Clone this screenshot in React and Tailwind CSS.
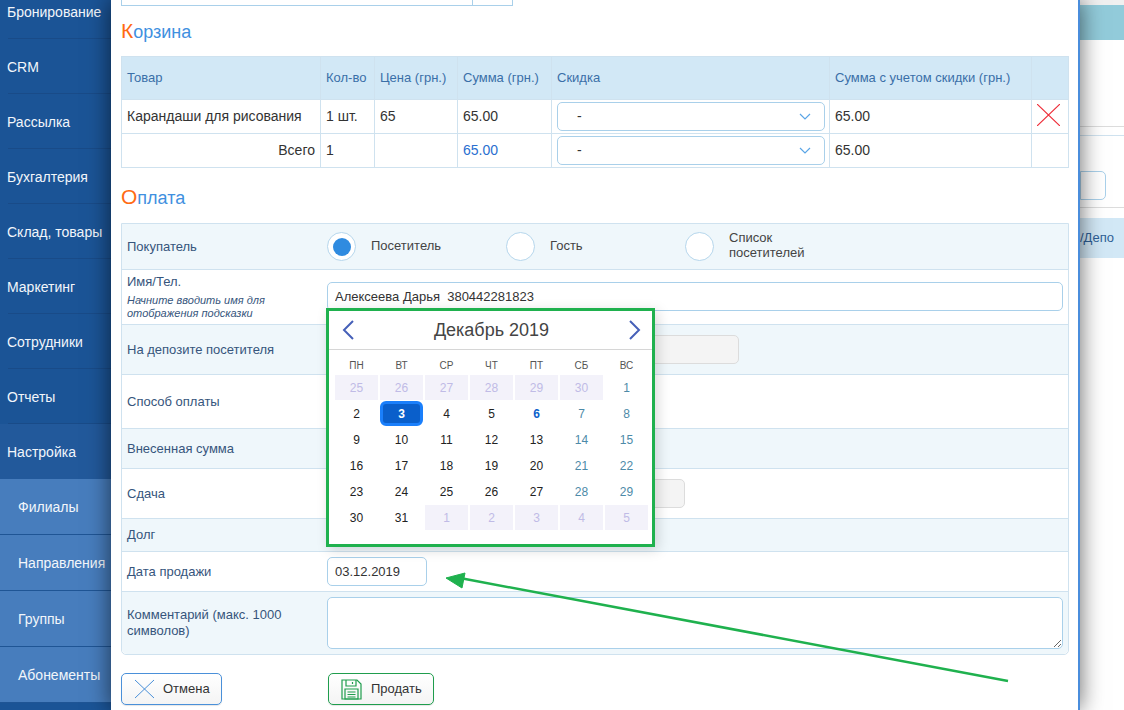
import React from 'react';

const FONT = "font-['Liberation_Sans',Arial,sans-serif]";

const menu = ['Бронирование', 'CRM', 'Рассылка', 'Бухгалтерия', 'Склад, товары', 'Маркетинг', 'Сотрудники', 'Отчеты'];
const subMenu = ['Филиалы', 'Направления', 'Группы', 'Абонементы'];

const weekdays = ['ПН', 'ВТ', 'СР', 'ЧТ', 'ПТ', 'СБ', 'ВС'];
const weeks = [
    [[25, 'o'], [26, 'o'], [27, 'o'], [28, 'o'], [29, 'o'], [30, 'o'], [1, 'w']],
    [[2], [3, 's'], [4], [5], [6, 't'], [7, 'w'], [8, 'w']],
    [[9], [10], [11], [12], [13], [14, 'w'], [15, 'w']],
    [[16], [17], [18], [19], [20], [21, 'w'], [22, 'w']],
    [[23], [24], [25], [26], [27], [28, 'w'], [29, 'w']],
    [[30], [31], [1, 'o'], [2, 'o'], [3, 'o'], [4, 'o'], [5, 'o']],
];

const Sidebar = () => (
    <div className="w-[111px] shrink-0 -mt-[16px] bg-[#1b5496] text-white">
        {menu.map((item) => (
            <div key={item} className="h-[55px] pl-[7px] pt-[2px] flex items-center text-[14px] text-[#f2f6fb] relative">
                <span className="whitespace-nowrap">{item}</span>
                <div className="absolute left-[8px] right-0 bottom-0 h-px bg-[#194b88]" />
            </div>
        ))}
        <div className="h-[55px] pl-[7px] pt-[2px] flex items-center text-[14px] text-[#f2f6fb] bg-[#22599b]">Настройка</div>
        {subMenu.map((item) => (
            <div key={item} className="h-[56px] pl-[18px] pt-[2px] flex items-center text-[14px] text-[#f2f6fb] bg-[#477dbd] border-b border-[#1f5595] whitespace-nowrap">
                {item}
            </div>
        ))}
    </div>
);

const Heading = ({ first, rest, className }) => (
    <div className={`flex items-center text-[18px] text-[#3f90e0] ${className}`}>
        <div className="leading-none">
            <span className="text-[#ff6a13] text-[21px]">{first}</span>
            {rest}
        </div>
    </div>
);

const Chevron = () => (
    <svg width="12" height="7" viewBox="0 0 12 7" fill="none" stroke="#5aa5e6" strokeWidth="1.2">
        <path d="M1 1l5 5 5-5" />
    </svg>
);

const SelectBox = () => (
    <div className="h-[29px] w-[268px] ml-[5px] flex items-center justify-between pl-[19px] pr-[13px] bg-white border border-[#a9d0ea] rounded-[5px] text-[14px] text-[#333]">
        <span>-</span>
        <Chevron />
    </div>
);

const Cart = () => (
    <table className="w-[947px] table-fixed border-collapse text-[14px] text-[#333]">
        <colgroup>
            <col className="w-[199px]" />
            <col className="w-[54px]" />
            <col className="w-[83px]" />
            <col className="w-[94px]" />
            <col className="w-[278px]" />
            <col className="w-[202px]" />
            <col className="w-[37px]" />
        </colgroup>
        <thead>
            <tr className="h-[43px] bg-[#d2e8f6] text-left text-[13px] text-[#3a6fa8]">
                {['Товар', 'Кол-во', 'Цена (грн.)', 'Сумма (грн.)', 'Скидка', 'Сумма с учетом скидки (грн.)', ''].map((title, i) => (
                    <th key={i} className="border border-[#cfe2ef] pl-[5px] font-normal whitespace-nowrap">{title}</th>
                ))}
            </tr>
        </thead>
        <tbody>
            <tr className="h-[34px]">
                <td className="border border-[#cfe2ef] pl-[5px] whitespace-nowrap">Карандаши для рисования</td>
                <td className="border border-[#cfe2ef] pl-[5px]">1 шт.</td>
                <td className="border border-[#cfe2ef] pl-[5px]">65</td>
                <td className="border border-[#cfe2ef] pl-[5px]">65.00</td>
                <td className="border border-[#cfe2ef]"><SelectBox /></td>
                <td className="border border-[#cfe2ef] pl-[5px]">65.00</td>
                <td className="border border-[#cfe2ef]">
                    <svg width="23" height="22" viewBox="0 0 23 22" stroke="#ee2e3a" strokeWidth="1.2" className="block ml-[5px] -mt-[4px]">
                        <path d="M0 0l23 22M23 0L0 22" />
                    </svg>
                </td>
            </tr>
            <tr className="h-[34px]">
                <td className="border border-[#cfe2ef] pr-[5px] text-right">Всего</td>
                <td className="border border-[#cfe2ef] pl-[5px]">1</td>
                <td className="border border-[#cfe2ef]"></td>
                <td className="border border-[#cfe2ef] pl-[5px] text-[#2a6fd0]">65.00</td>
                <td className="border border-[#cfe2ef]"><SelectBox /></td>
                <td className="border border-[#cfe2ef] pl-[5px]">65.00</td>
                <td className="border border-[#cfe2ef]"></td>
            </tr>
        </tbody>
    </table>
);

const Radio = ({ checked, children, className }) => (
    <div className={`flex items-center gap-[15px] text-[13px] text-[#444] leading-[15px] ${className}`}>
        <div className="w-[29px] h-[29px] shrink-0 rounded-full bg-white border border-[#b5d6ec] flex items-center justify-center">
            {checked && <div className="w-[18px] h-[18px] rounded-full bg-[#2f8be0]" />}
        </div>
        <span className="-mt-[3px]">{children}</span>
    </div>
);

const Row = ({ height, light, last, label, children }) => (
    <div className={`${height} grid grid-cols-[205px_1fr] items-center ${light ? 'bg-[#eff7fb]' : 'bg-white'} ${last ? 'rounded-b-[5px]' : 'border-b border-[#cfe2ef]'}`}>
        <div className="pl-[5px] pr-[10px] text-[13px] text-[#36557c] leading-[16px]">{label}</div>
        <div>{children}</div>
    </div>
);

const Disabled = ({ width }) => (
    <div className={`h-[29px] ${width} bg-[#f4f4f4] border border-[#dcdcdc] rounded-[5px]`} />
);

const dayClass = (kind) => {
    if (kind === 'o') return 'bg-[#f3f2fa] text-[#c0bbe6]';
    if (kind === 'w') return 'text-[#4d8aa8]';
    if (kind === 't') return 'text-[#0a5fcb] font-bold';
    if (kind === 's') return 'bg-[#0a5fcb] border-[3px] border-[#1a7ffb] rounded-[6px] text-white font-bold';
    return 'text-[#222]';
};

const Calendar = () => (
    <div className="absolute left-[204px] top-[84px] w-[329px] h-[239px] bg-white border-[3px] border-[#1fb14e] shadow-[3px_3px_12px_rgba(0,0,0,0.15)]">
        <div className="h-[39px] flex items-center justify-between pl-[13px] pr-[11px] border-b border-[#d6d6d6]">
            <svg width="12" height="20" viewBox="0 0 12 20" fill="none" stroke="#4660b8" strokeWidth="2">
                <path d="M11 1L2 10l9 9" />
            </svg>
            <span className="text-[18px] text-[#444]">Декабрь 2019</span>
            <svg width="12" height="20" viewBox="0 0 12 20" fill="none" stroke="#4660b8" strokeWidth="2">
                <path d="M1 1l9 9-9 9" />
            </svg>
        </div>
        <div className="pl-[6px] pt-[7px]">
            <div className="grid grid-cols-[repeat(7,43px)] gap-x-[2px] h-[18px] pb-[1px] items-center text-center text-[10px] text-[#555]">
                {weekdays.map((d) => <div key={d}>{d}</div>)}
            </div>
            <div className="grid grid-cols-[repeat(7,43px)] auto-rows-[25px] gap-x-[2px] gap-y-px text-[12px]">
                {weeks.flat().map(([day, kind], i) => (
                    <div key={i} className={`flex items-center justify-center ${dayClass(kind)}`}>{day}</div>
                ))}
            </div>
        </div>
    </div>
);

const Payment = () => (
    <div className="relative w-[948px] border border-[#cfe2ef] rounded-b-[5px]">
        <Row height="h-[46px]" light label="Покупатель">
            <div className="flex">
                <Radio checked className="w-[179px]">Посетитель</Radio>
                <Radio className="w-[179px]">Гость</Radio>
                <Radio className="w-[150px]">Список<br />посетителей</Radio>
            </div>
        </Row>
        <Row height="h-[55px]" label={
            <div>
                <div className="mb-[4px]">Имя/Тел.</div>
                <div className="text-[11px] italic leading-[13px]">Начните вводить имя для отображения подсказки</div>
            </div>
        }>
            <input
                readOnly
                defaultValue="Алексеева Дарья  380442281823"
                className="block -mt-[2px] w-[736px] h-[29px] px-[7px] bg-white border border-[#a9d0ea] rounded-[5px] text-[13px] text-[#333] outline-none"
            />
        </Row>
        <Row height="h-[50px]" light label="На депозите посетителя"><Disabled width="w-[412px]" /></Row>
        <Row height="h-[54px]" label="Способ оплаты" />
        <Row height="h-[40px]" light label="Внесенная сумма" />
        <Row height="h-[50px]" label="Сдача"><Disabled width="w-[358px]" /></Row>
        <Row height="h-[33px]" light label="Долг" />
        <Row height="h-[40px]" label="Дата продажи">
            <input
                readOnly
                defaultValue="03.12.2019"
                className="block w-[100px] h-[29px] px-[7px] bg-white border border-[#a9d0ea] rounded-[5px] text-[13px] text-[#333] outline-none"
            />
        </Row>
        <Row height="h-[62px]" light last label="Комментарий (макс. 1000 символов)">
            <textarea className="block w-[736px] h-[52px] bg-white border border-[#a9d0ea] rounded-[5px] outline-none resize-y" />
        </Row>
        <Calendar />
    </div>
);

const Buttons = () => (
    <div className="flex mt-[18px]">
        <button className="w-[101px] h-[32px] flex items-center pl-[12px] gap-[8px] border border-[#4a90d9] rounded-[5px] bg-gradient-to-b from-white to-[#f4f4f4] text-[13px] text-[#333] shadow-[0_1px_1px_rgba(0,0,0,0.1)]">
            <svg width="21" height="20" viewBox="0 0 21 20" stroke="#4a90d9" strokeWidth="1">
                <path d="M1 1l19 18M20 1L1 19" />
            </svg>
            Отмена
        </button>
        <button className="w-[106px] h-[32px] ml-[106px] flex items-center pl-[12px] gap-[9px] border border-[#1f9d4d] rounded-[5px] bg-gradient-to-b from-white to-[#f4f4f4] text-[13px] text-[#333] shadow-[0_1px_1px_rgba(0,0,0,0.1)]">
            <svg width="21" height="21" viewBox="0 0 21 21" fill="none" stroke="#1f9d4d" strokeWidth="1.2">
                <path d="M1 1h15l4 4v15H1z" />
                <path d="M5 1v6h10V1M11.5 3v2" />
                <path d="M4 10h13v10H4zM6.5 13h8M6.5 15.5h8M6.5 18h8" />
            </svg>
            Продать
        </button>
    </div>
);

// зеленая стрелка-аннотация поверх формы
const Arrow = () => (
    <svg className="absolute left-0 top-0 pointer-events-none" width="1124" height="710">
        <path d="M1008 681L460 578" stroke="#1fb14e" strokeWidth="2.5" />
        <path d="M446 578l19-5-3 15z" fill="#1fb14e" stroke="#1fb14e" />
    </svg>
);

const Backdrop = () => (
    <div className="flex-1 bg-white">
        <div className="h-[5px] bg-[#f0f0f0]" />
        <div className="h-[35px] bg-[#92cbda]" />
        <div className="h-[87px] border-b border-[#dcdcdc]" />
        <div className="h-[9px] border-b border-[#cfe2ef]" />
        <div className="mt-[35px] h-[29px] w-[26px] bg-white border border-[#a9d0ea] rounded-r-[5px]" />
        <div className="mt-[7px] h-px bg-[#dcdcdc]" />
        <div className="mt-[10px] h-[40px] flex items-center bg-[#d2e8f6] text-[13px] text-[#2f5f96]">/Депо</div>
    </div>
);

const App = () => (
    <div className={`relative w-[1124px] h-[710px] flex overflow-hidden bg-white ${FONT}`}>
        <Sidebar />
        <div className="relative z-10 w-[969px] h-[710px] shrink-0 pl-[10px] bg-white border-r-2 border-[#4a8ddc] shadow-[0_0_22px_rgba(0,0,0,0.6)]">
            <div className="w-[392px] h-[6px] border-x border-b border-[#a9d0ea] flex justify-end">
                <div className="w-[40px] border-l border-[#a9d0ea]" />
            </div>
            <Heading first="К" rest="орзина" className="h-[50px] pb-[2px]" />
            <Cart />
            <Heading first="О" rest="плата" className="h-[55px] pt-[2px]" />
            <Payment />
            <Buttons />
        </div>
        <Backdrop />
        <div className="absolute inset-0 z-20 pointer-events-none"><Arrow /></div>
    </div>
);

export default App;
